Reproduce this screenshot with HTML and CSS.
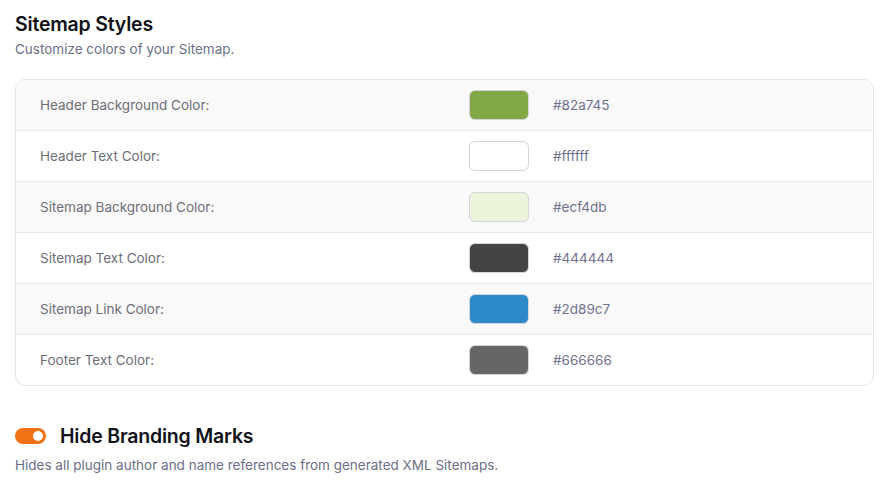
FILE: index.html
```html
<!DOCTYPE html>
<html>
<head>
<meta charset="utf-8">
<link rel="stylesheet" href="styles.css">
</head>
<body>
<div class="page">
  <section class="section">
    <h2 class="title">Sitemap Styles</h2>
    <p class="desc">Customize colors of your Sitemap.</p>
    <div class="table">
      <div class="row"><span class="label">Header Background Color:</span><span class="swatch" style="background:#82a745"></span><span class="hex">#82a745</span></div>
      <div class="row"><span class="label">Header Text Color:</span><span class="swatch" style="background:#ffffff"></span><span class="hex">#ffffff</span></div>
      <div class="row"><span class="label">Sitemap Background Color:</span><span class="swatch" style="background:#ecf4db"></span><span class="hex">#ecf4db</span></div>
      <div class="row"><span class="label">Sitemap Text Color:</span><span class="swatch" style="background:#444444"></span><span class="hex">#444444</span></div>
      <div class="row"><span class="label">Sitemap Link Color:</span><span class="swatch" style="background:#2d89c7"></span><span class="hex">#2d89c7</span></div>
      <div class="row"><span class="label">Footer Text Color:</span><span class="swatch" style="background:#666666"></span><span class="hex">#666666</span></div>
    </div>
  </section>
  <section class="section branding">
    <div class="toggle-head">
      <span class="toggle"><span class="knob"></span></span>
      <h2 class="title">Hide Branding Marks</h2>
    </div>
    <p class="desc">Hides all plugin author and name references from generated XML Sitemaps.</p>
  </section>
</div>
</body>
</html>
```
FILE: styles.css
```css
html, body {
  margin: 0;
  padding: 0;
  background: #ffffff;
}
body {
  font-family: Inter, "Noto Sans", sans-serif;
}
.page {
  padding: 12px 17px 0 15px;
}
.title {
  margin: 0;
  font-size: 19.5px;
  line-height: 24px;
  font-weight: 600;
  color: #111118;
  letter-spacing: -0.2px;
}
.desc {
  margin: 4px 0 0;
  font-size: 13.5px;
  line-height: 18px;
  color: #6b7088;
}
.table {
  margin-top: 21px;
  border: 1px solid #e6e6e9;
  border-radius: 10px;
  overflow: hidden;
}
.row {
  display: grid;
  grid-template-columns: 429px 84px 1fr;
  align-items: center;
  height: 50px;
  padding-left: 24px;
  border-top: 1px solid #e8e8ea;
}
.row:first-child {
  border-top: none;
}
.row:nth-child(odd) {
  background: #f9f9f9;
}
.label {
  font-size: 13.5px;
  color: #6e6e7a;
}
.swatch {
  width: 58px;
  height: 28px;
  border: 1px solid #d6d3e0;
  border-radius: 6px;
}
.hex {
  font-size: 13.5px;
  color: #6e7190;
}
.branding {
  margin-top: 38px;
}
.toggle-head {
  display: flex;
  align-items: center;
  gap: 14px;
}
.toggle {
  width: 31px;
  height: 16px;
  border-radius: 8px;
  background: #f47216;
  display: flex;
  align-items: center;
  justify-content: flex-end;
  padding-right: 3px;
  box-sizing: border-box;
}
.knob {
  width: 10px;
  height: 10px;
  border-radius: 50%;
  background: #ffffff;
}
.branding .desc {
  margin-top: 8px;
}
```
